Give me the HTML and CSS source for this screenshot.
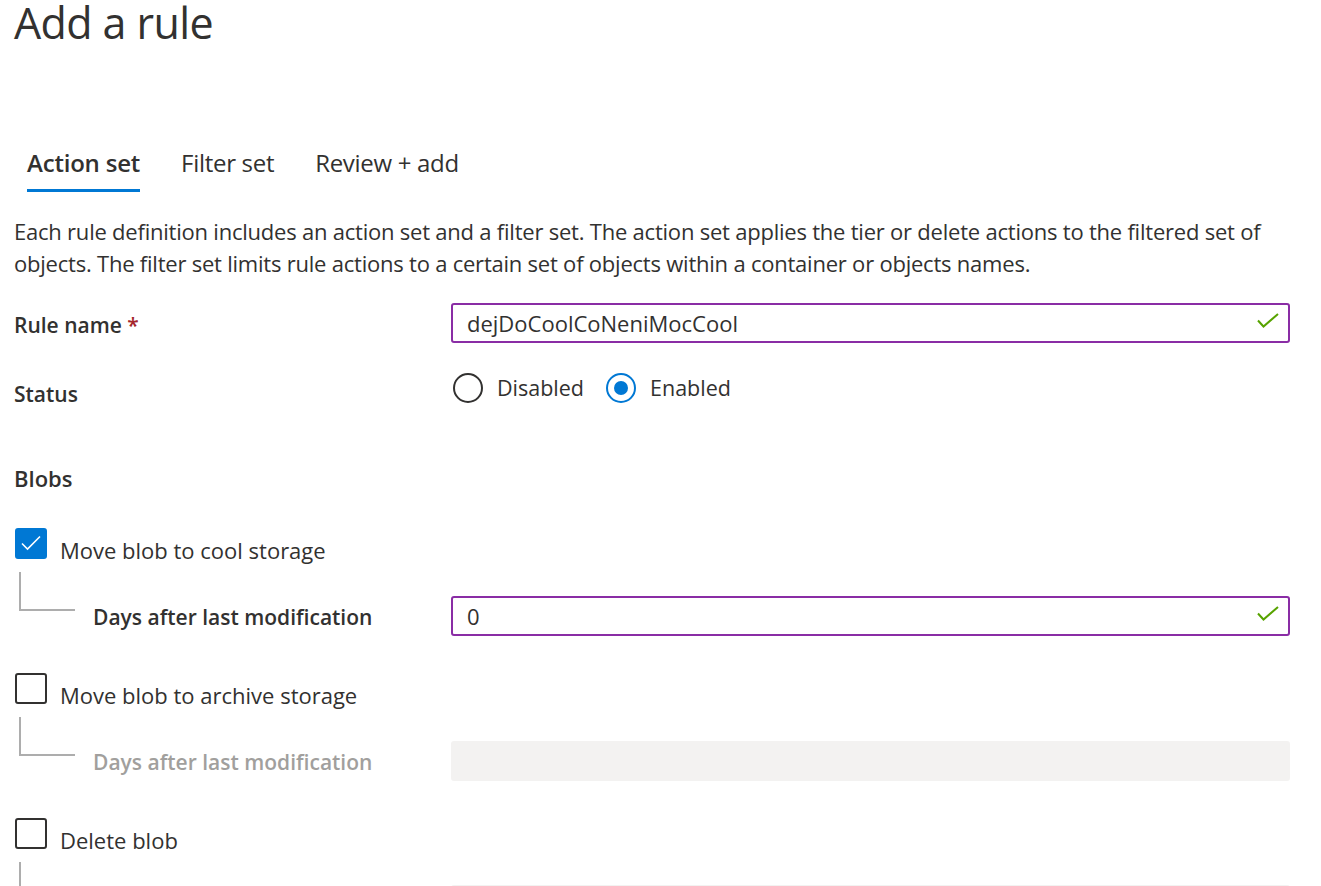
FILE: index.html
```html
<!DOCTYPE html>
<html lang="en">
<head>
<meta charset="utf-8">
<title>Add a rule</title>
<link rel="stylesheet" href="styles.css">
</head>
<body>
<div class="page">
  <h1 class="title">Add a rule</h1>

  <nav class="tabs">
    <span class="tab active">Action set</span>
    <span class="tab">Filter set</span>
    <span class="tab">Review + add</span>
  </nav>

  <p class="desc">Each rule definition includes an action set and a filter set. The action set applies the tier or delete actions to the filtered set of objects. The filter set limits rule actions to a certain set of objects within a container or objects names.</p>

  <div class="form-row row-name">
    <div class="lbl">Rule name <span class="req">*</span></div>
    <div class="input valid">
      <span class="value">dejDoCoolCoNeniMocCool</span>
      <svg class="ok" width="22" height="16" viewBox="0 0 22 16"><path d="M1 7.5 L6.5 13.5 L21 1" fill="none" stroke="#57a300" stroke-width="2"/></svg>
    </div>
  </div>

  <div class="form-row row-status">
    <div class="lbl lbl-status">Status</div>
    <div class="radios">
      <span class="radio"><span class="circle"></span><span class="rtext">Disabled</span></span>
      <span class="radio on"><span class="circle"><span class="dot"></span></span><span class="rtext">Enabled</span></span>
    </div>
  </div>

  <h2 class="section">Blobs</h2>

  <div class="check-row first">
    <span class="cb checked"><svg width="32" height="31" viewBox="0 0 32 31"><path d="M7 15.5 L12.5 21 L25 8.5" fill="none" stroke="#fff" stroke-width="1.6"/></svg></span>
    <span class="cbtext">Move blob to cool storage</span>
  </div>
  <div class="sub-row">
    <div class="sub-lbl"><span class="connector"></span><span class="sub-text">Days after last modification</span></div>
    <div class="input valid sub-input">
      <span class="value">0</span>
      <svg class="ok" width="22" height="16" viewBox="0 0 22 16"><path d="M1 7.5 L6.5 13.5 L21 1" fill="none" stroke="#57a300" stroke-width="2"/></svg>
    </div>
  </div>

  <div class="check-row">
    <span class="cb"></span>
    <span class="cbtext">Move blob to archive storage</span>
  </div>
  <div class="sub-row">
    <div class="sub-lbl"><span class="connector"></span><span class="sub-text disabled">Days after last modification</span></div>
    <div class="input disabled-input sub-input"></div>
  </div>

  <div class="check-row">
    <span class="cb"></span>
    <span class="cbtext">Delete blob</span>
  </div>
  <div class="sub-row last">
    <div class="sub-lbl"><span class="connector open"></span></div>
    <div class="input disabled-input sub-input"></div>
  </div>
</div>
</body>
</html>
```

FILE: styles.css
```css
* { box-sizing: border-box; }
html, body { margin: 0; padding: 0; background: #fff; }
body {
  font-family: "Open Sans", "Noto Sans", sans-serif;
  color: #323130;
  overflow: hidden;
  height: 886px;
}
.page {
  padding-left: 14px;
  width: 1291px;
}
.title {
  margin: 0;
  padding-top: 1px;
  font-size: 43px;
  line-height: 44px;
  font-weight: 400;
  letter-spacing: -0.6px;
}
.tabs {
  display: flex;
  margin-top: 102px;
  padding-left: 13px;
}
.tab {
  font-size: 24px;
  line-height: 32px;
  padding-bottom: 10px;
  border-bottom: 3px solid transparent;
  margin-right: 41px;
  letter-spacing: -0.3px;
}
.tab.active {
  border-bottom-color: #0078d4;
  font-weight: 600;
  letter-spacing: -0.2px;
}
.desc {
  margin: 23px 0 0;
  font-size: 22px;
  line-height: 32px;
  letter-spacing: -0.22px;
  width: 1280px;
}
.form-row {
  display: grid;
  grid-template-columns: 437px 839px;
}
.row-name { margin-top: 24px; }
.lbl {
  font-size: 21px;
  line-height: 32px;
  font-weight: 600;
  padding-top: 6px;
}
.req { color: #a4262c; }
.input {
  height: 40px;
  border: 2px solid #8a2da5;
  border-radius: 3px;
  display: flex;
  align-items: center;
  justify-content: space-between;
  padding: 0 9px 0 14px;
  font-size: 22px;
}
.ok { display: block; margin-top: -4px; }
.row-status { margin-top: 29px; }
.lbl-status { padding-top: 6px; }
.radios { display: flex; align-items: center; gap: 22px; height: 32px; align-self: start; }
.radio { display: flex; align-items: center; }
.circle {
  width: 30px; height: 30px;
  border: 2px solid #323130;
  border-radius: 50%;
  margin-left: 2px;
  display: flex; align-items: center; justify-content: center;
}
.radio.on .circle { border-color: #0078d4; }
.dot { width: 14px; height: 14px; border-radius: 50%; background: #0078d4; }
.rtext { font-size: 21.5px; line-height: 32px; margin-left: 14px; }
.radio.on { margin-left: -2px; }
.section {
  margin: 52px 0 0;
  font-size: 22px;
  line-height: 32px;
  font-weight: 600;
}
.check-row {
  display: flex;
  align-items: flex-start;
  margin-top: 37px;
  height: 44px;
  padding-left: 1px;
}
.check-row.first { margin-top: 34px; }
.cb {
  width: 32px; height: 31px;
  border: 2px solid #323130;
  border-radius: 3px;
  flex: none;
  display: block;
}
.cb.checked { background: #0078d4; border-color: #0078d4; }
.cb svg { display: block; margin: -2px; }
.cbtext {
  font-size: 22px;
  line-height: 32px;
  margin-left: 13px;
  padding-top: 6px;
}
.sub-row {
  display: grid;
  grid-template-columns: 437px 839px;
}
.sub-lbl { display: flex; align-items: flex-start; }
.connector {
  width: 56px;
  height: 39px;
  margin-left: 5px;
  border-left: 2px solid #adadad;
  border-bottom: 2px solid #adadad;
  flex: none;
}
.connector.open { border-bottom: none; height: 60px; }
.sub-text {
  font-size: 21px;
  line-height: 32px;
  font-weight: 600;
  margin-left: 18px;
  padding-top: 29px;
}
.sub-text.disabled { color: #a19f9d; }
.sub-input { margin-top: 24px; }
.disabled-input { background: #f3f2f1; border-color: #f3f2f1; }
.sub-row.last .sub-input { margin-top: 23px; }
```
